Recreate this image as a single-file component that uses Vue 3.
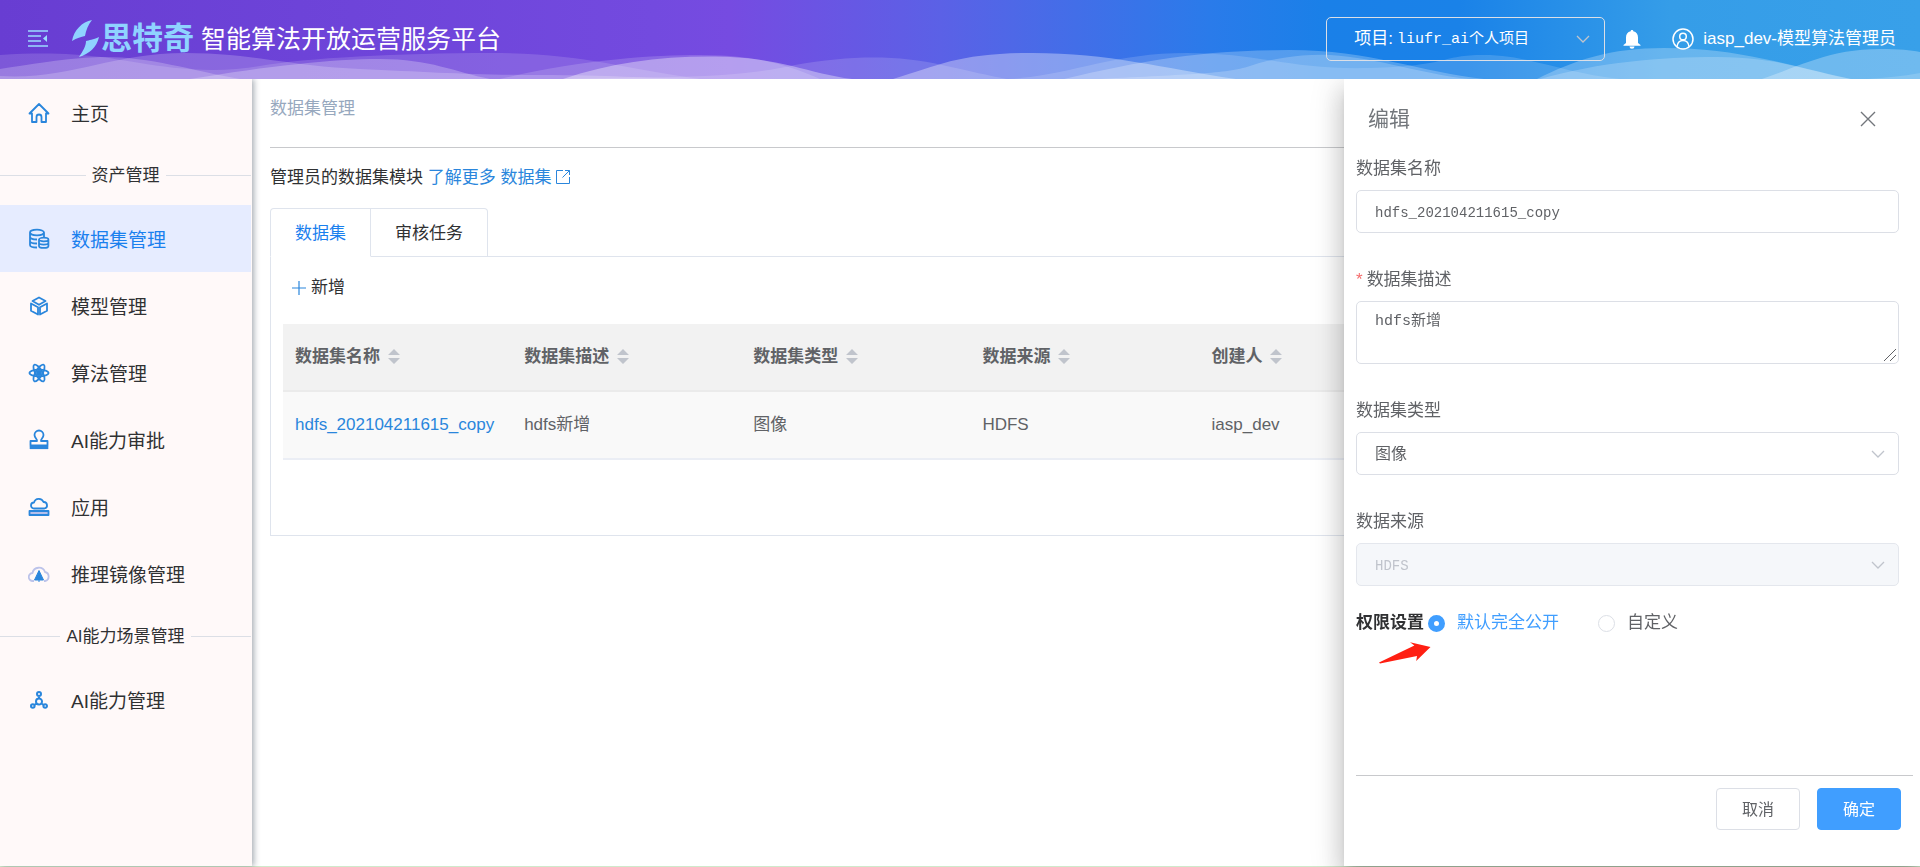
<template>
  <div class="layout">
    <header class="top-bar">
      <svg class="waves" viewBox="0 0 1920 79" preserveAspectRatio="none" aria-hidden="true">
        <path v-for="(wave, i) in waves" :key="i" :d="wave.d" fill="#fff" :fill-opacity="wave.o" />
      </svg>
      <button class="icon-btn fold-btn" aria-label="折叠菜单">
        <svg width="20" height="18" viewBox="0 0 20 18">
          <path d="M0 1h20M0 6h13M0 11h13M0 16h20" stroke="#9bdcff" stroke-width="1.4" fill="none" />
          <path d="M19 5v7l-4-3.500z" fill="#9bdcff" />
        </svg>
      </button>
      <svg class="logo-mark" width="27" height="37" viewBox="0 0 27 37" aria-hidden="true">
        <path d="M20 0C10 2 2 10 0 21C5 18 9 17 13 16C14 10 16 5 20 0Z" fill="#8fd3ff" />
        <path d="M27 17C21 20 17 20 14 21C14 26 11 31 7 37C17 34 25 27 27 17Z" fill="#8fd3ff" />
      </svg>
      <span class="logo-name">思特奇</span>
      <h1 class="title">智能算法开放运营服务平台</h1>
      <div class="project">
        <label for="project">项目:</label>
        <select id="project" v-model="project">
          <option>liufr_ai个人项目</option>
        </select>
        <svg class="arrow" width="14" height="8" viewBox="0 0 14 8" aria-hidden="true">
          <path d="M1 1l6 6 6-6" stroke="#c0c4cc" stroke-width="1.3" fill="none" />
        </svg>
      </div>
      <button class="icon-btn bell" aria-label="消息">
        <svg width="18" height="20" viewBox="0 0 18 20">
          <path d="M9 1c.9 0 1.300.5 1.300 1.300C13.500 3 15 5.500 15 8.500V14l2.500 2v.8H.5V16L3 14V8.500C3 5.500 4.500 3 7.700 2.300 7.700 1.500 8.100 1 9 1zM6.500 17.500h5a2.500 2.200 0 0 1-5 0z" fill="#fff" />
        </svg>
      </button>
      <a class="user" href="#">
        <svg width="22" height="22" viewBox="0 0 22 22" fill="none" stroke="#fff" stroke-width="1.500">
          <circle cx="11" cy="11" r="10" />
          <circle cx="11" cy="8.500" r="3.300" />
          <path d="M5 18.500c.5-4 3-6 6-6s5.500 2 6 6" />
        </svg>
        <span>iasp_dev-模型算法管理员</span>
      </a>
    </header>

    <div class="body">
      <nav class="sidebar">
        <template v-for="item in menus" :key="item.name">
          <div v-if="item.group" class="group"><span>{{ item.name }}</span></div>
          <a v-else href="#" class="menu-item" :class="{ active: item.name === current }" @click.prevent="current = item.name">
            <svg width="22" height="22" viewBox="0 0 22 22" aria-hidden="true">
              <path
                v-for="(p, i) in item.icon"
                :key="i"
                :d="p.d"
                :fill="p.fill || 'none'"
                :stroke="p.stroke || '#2a86dc'"
                :stroke-width="p.w || 1.8"
                :transform="p.t"
                stroke-linejoin="round"
              />
            </svg>
            <span>{{ item.name }}</span>
          </a>
        </template>
      </nav>

      <main class="content">
        <div class="crumb">数据集管理</div>
        <p class="intro">
          管理员的数据集模块
          <a href="#">了解更多 数据集<svg width="16" height="16" viewBox="0 0 16 16" fill="none" stroke="#2a86dc">
            <path d="M8 1.500H1.500v13h13V8M10 1.500h4.500V6M14.500 1.500L7.500 8.500" />
          </svg></a>
        </p>
        <div class="tabs">
          <button class="tab" :class="{ on: tab === 0 }" @click="tab = 0">数据集</button>
          <button class="tab" :class="{ on: tab === 1 }" @click="tab = 1">审核任务</button>
          <span class="tab-rest"></span>
        </div>
        <section class="panel">
          <button class="add">
            <svg width="14" height="14" viewBox="0 0 14 14"><path d="M7 0v14M0 7h14" stroke="#2a86dc" stroke-width="1.200" /></svg>
            新增
          </button>
          <table>
            <thead>
              <tr>
                <th v-for="col in columns" :key="col">
                  {{ col }}
                  <svg width="12" height="16" viewBox="0 0 12 16" aria-hidden="true">
                    <path d="M6 1l6 6H0zM6 16l6-6H0z" fill="#c0c4cc" />
                  </svg>
                </th>
                <th></th>
                <th></th>
              </tr>
            </thead>
            <tbody>
              <tr>
                <td><a href="#">hdfs_202104211615_copy</a></td>
                <td>hdfs新增</td>
                <td>图像</td>
                <td>HDFS</td>
                <td>iasp_dev</td>
                <td></td>
                <td></td>
              </tr>
            </tbody>
          </table>
        </section>
      </main>
    </div>
    <div class="bottom-line"></div>

    <!-- 编辑抽屉 -->
    <aside class="drawer">
      <div class="drawer-head">
        <h2>编辑</h2>
        <button class="icon-btn" aria-label="关闭">
          <svg width="16" height="16" viewBox="0 0 16 16"><path d="M1 1l14 14M15 1L1 15" stroke="#72767b" stroke-width="1.400" /></svg>
        </button>
      </div>
      <form class="form" @submit.prevent>
        <div class="field">
          <label for="name">数据集名称</label>
          <input id="name" v-model="form.name" type="text" />
        </div>
        <div class="field">
          <label for="desc" class="required">数据集描述</label>
          <div class="area-wrap">
            <textarea id="desc" v-model="form.desc"></textarea>
            <svg class="grip" width="14" height="14" viewBox="0 0 14 14" aria-hidden="true">
              <path d="M1 13L13 1M7 13l6-6" stroke="#606266" fill="none" />
            </svg>
          </div>
        </div>
        <div class="field">
          <label for="type">数据集类型</label>
          <div class="select-wrap">
            <select id="type" v-model="form.type" class="cn"><option>图像</option></select>
            <svg class="arrow" width="14" height="8" viewBox="0 0 14 8" aria-hidden="true">
              <path d="M1 1l6 6 6-6" stroke="#c0c4cc" stroke-width="1.300" fill="none" />
            </svg>
          </div>
        </div>
        <div class="field">
          <label for="source">数据来源</label>
          <div class="select-wrap">
            <select id="source" v-model="form.source" disabled><option>HDFS</option></select>
            <svg class="arrow" width="14" height="8" viewBox="0 0 14 8" aria-hidden="true">
              <path d="M1 1l6 6 6-6" stroke="#c0c4cc" stroke-width="1.300" fill="none" />
            </svg>
          </div>
        </div>
        <div class="auth" role="radiogroup" aria-labelledby="auth-title">
          <b id="auth-title">权限设置</b>
          <label><input v-model="form.auth" type="radio" name="auth" value="open" /><span>默认完全公开</span></label>
          <label><input v-model="form.auth" type="radio" name="auth" value="custom" /><span>自定义</span></label>
          <svg class="pointer" width="52" height="22" viewBox="0 0 52 22" aria-hidden="true">
            <path d="M0 20.500L35.400 3.500 31 .3 51.500 5 37.200 19 38 14 1 21.500z" fill="#ff1f12" />
          </svg>
        </div>
      </form>
      <div class="drawer-foot">
        <button class="btn">取消</button>
        <button class="btn primary">确定</button>
      </div>
    </aside>
  </div>
</template>

<script setup>
import { ref, reactive } from 'vue'

const project = ref('liufr_ai个人项目')
const current = ref('数据集管理')
const tab = ref(0)
const columns = ['数据集名称', '数据集描述', '数据集类型', '数据来源', '创建人']

const form = reactive({
  name: 'hdfs_202104211615_copy',
  desc: 'hdfs新增',
  type: '图像',
  source: 'HDFS',
  auth: 'open'
})

// 花瓣图标：同一个椭圆旋转三次
const petal = 'M1.500 11a9.500 3.400 0 1 0 19 0a9.500 3.400 0 1 0 -19 0'

const menus = [
  {
    name: '主页',
    icon: [{ d: 'M1.500 11.500L11 2l9.500 9.500H18V20h-4.500v-5a2.500 2.500 0 0 0-5 0v5H4v-8.500z' }]
  },
  { name: '资产管理', group: true },
  {
    name: '数据集管理',
    icon: [
      { d: 'M2 4.500a7 2.800 0 1 0 14 0a7 2.800 0 1 0 -14 0M2 4.500V17c0 1.500 3 2.500 7 2.500M16 4.500V9M2 8.500c0 2 3.500 3 7 3M2 13c0 1.500 3 2.500 7 2.500' },
      { d: 'M11 11.500a4.700 1.800 0 1 0 9.400 0a4.700 1.800 0 1 0 -9.400 0V18c0 2.600 9.400 2.600 9.400 0V11.500M11 14.800c0 2.400 9.400 2.400 9.400 0' }
    ]
  },
  {
    name: '模型管理',
    icon: [
      { d: 'M11 2.500L17.500 6 11 9.800 4.500 6z' },
      { d: 'M3 8.500l7 3.800v7.200l-7-3.800z' },
      { d: 'M19 8.500l-7 3.800v7.200l7-3.800z' }
    ]
  },
  {
    name: '算法管理',
    icon: [
      { d: petal },
      { d: petal, t: 'rotate(60 11 11)' },
      { d: petal, t: 'rotate(120 11 11)' },
      { d: 'M9 11a2 2 0 1 0 4 0a2 2 0 1 0 -4 0', fill: '#2a86dc' }
    ]
  },
  {
    name: 'AI能力审批',
    icon: [
      { d: 'M9 12c.5-2-2.500-3-2.500-6a4.500 4.500 0 0 1 9 0c0 3-3 4-2.500 6h6.500v4.500h-17V12z' },
      { d: 'M1.700 18.500h18.600', w: 3.2 }
    ]
  },
  {
    name: '应用',
    icon: [
      { d: 'M6 12.500a3 3 0 0 1 0-6a5 5 0 0 1 9.500-.5a3.300 3.300 0 0 1 1 6.500z' },
      { d: 'M1.500 15h19v4h-19z', fill: '#b5bfeb' }
    ]
  },
  {
    name: '推理镜像管理',
    icon: [
      { d: 'M6 18H5a4 4 0 0 1-.5-8a6.500 6.500 0 0 1 12.500-1a4.600 4.600 0 0 1 0 9h-1', stroke: '#bcc3ea' },
      { d: 'M11 7.500L15.500 17h-9zM11 8v11', fill: '#2a86dc', w: 1 }
    ]
  },
  { name: 'AI能力场景管理', group: true },
  {
    name: 'AI能力管理',
    icon: [
      { d: 'M9 5a2 2 0 1 0 4 0a2 2 0 1 0 -4 0M8 12.500a3 3 0 1 0 6 0a3 3 0 1 0 -6 0M3 17a1.800 1.800 0 1 0 3.600 0a1.800 1.800 0 1 0 -3.600 0M15.400 17a1.800 1.800 0 1 0 3.600 0a1.800 1.800 0 1 0 -3.600 0M11 7v2.500M8.500 14.500L6.500 16M13.500 14.500l2 1.500', w: 2 }
    ]
  }
]

// 顶部波浪
const waves = [
  { o: 0.14, d: 'M0 55C70 50 110 58 140 63S215 74 260 66S400 53 490 53S620 68 700 79H0Z' },
  { o: 0.22, d: 'M0 69C50 61 80 57 105 57C150 57 190 70 240 79H0Z' },
  { o: 0.2, d: 'M0 76C70 80 110 53 185 53C250 53 290 66 360 69S470 75 540 75S640 78 700 79H0Z' },
  { o: 0.25, d: 'M190 79C270 66 330 59 380 59C430 59 455 72 490 79Z' },
  { o: 0.36, d: 'M563 79C610 63 660 56 715 56.500C780 57 810 74 852 79Z' },
  { o: 0.16, d: 'M500 79C580 60 650 55 700 55C760 55 790 66 820 79Z' },
  { o: 0.15, d: 'M560 79C660 76 730 80 795 65C850 55 900 55 942 65C970 71 990 76 1007 79Z' },
  { o: 0.34, d: 'M893 79C940 65 960 53 1032 53C1110 53 1160 68 1236 79Z' },
  { o: 0.15, d: 'M1007 79C1070 76 1110 53 1187 53C1260 53 1290 70 1370 68S1440 55 1484 55S1560 72 1620 79Z' },
  { o: 0.24, d: 'M1064 79C1140 61 1200 50 1290 50C1370 50 1420 72 1484 79Z' },
  { o: 0.2, d: 'M1100 79C1190 74 1225 74 1250 66S1300 54 1330 55C1380 58 1420 74 1470 79Z' },
  { o: 0.25, d: 'M1537 79C1575 60 1610 48 1664 48C1740 48 1790 66 1851 79Z' },
  { o: 0.2, d: 'M1540 79C1600 62 1660 57 1717 57C1780 57 1810 72 1851 79Z' },
  { o: 0.28, d: 'M1762 79C1800 66 1830 49 1880 49C1900 49 1910 50 1920 52V79Z' },
  { o: 0.16, d: 'M1740 79C1830 80 1870 82 1920 73V79Z' }
]
</script>

<style>
body {
  margin: 0;
}
</style>

<style scoped>
* {
  box-sizing: border-box;
}

.layout {
  display: flex;
  flex-direction: column;
  min-height: 100vh;
  background: #fff;
  color: #303133;
  font-family: 'Liberation Sans', 'Noto Sans CJK SC', sans-serif;
  font-size: 17px;
  line-height: 24px;
}

a {
  color: #2a86dc;
  text-decoration: none;
}

button,
select,
input,
textarea {
  font-family: inherit;
  font-size: inherit;
  margin: 0;
}

svg {
  flex: none;
}

.icon-btn {
  display: flex;
  padding: 0;
  border: none;
  background: none;
  cursor: pointer;
}

/* 顶栏 */
.top-bar {
  position: relative;
  z-index: 20;
  display: flex;
  align-items: center;
  height: 79px;
  padding: 0 24px 2px 28px;
  color: #fff;
  background: linear-gradient(90deg, #683dd2 0%, #734adf 34%, #764be1 38%, #5b61e6 49%, #2a7bea 63%, #1a80e8 69%, #1a82e8 76%, #359de8 87%, #38a0e9 100%);
}

.waves {
  position: absolute;
  left: 0;
  top: 0;
  width: 100%;
  height: 100%;
  pointer-events: none;
}

.fold-btn {
  margin-right: 24px;
}

.logo-mark {
  margin-right: 2px;
}

.logo-name {
  margin-right: 7px;
  color: #8fd3ff;
  font-size: 31px;
  font-weight: bold;
  line-height: 36px;
}

.title {
  margin: 0 auto 0 0;
  font-size: 25px;
  font-weight: normal;
  line-height: 36px;
}

.project {
  position: relative;
  display: flex;
  align-items: center;
  width: 279px;
  height: 44px;
  margin-right: 18px;
  padding-left: 27px;
  border: 1px solid #dcdfe6;
  border-radius: 5px;
}

.project select {
  flex: 1;
  height: 42px;
  padding: 2px 0 0 4px;
  border: none;
  outline: none;
  background: transparent;
  color: #fff;
  font-family: 'Liberation Mono', 'Noto Sans CJK SC', monospace;
  font-size: 15px;
  appearance: none;
}

.arrow {
  position: absolute;
  right: 14px;
  top: 50%;
  margin-top: -4px;
  pointer-events: none;
}

.bell {
  margin-right: 31px;
}

.user {
  display: flex;
  align-items: center;
  gap: 9px;
  color: #fff;
}

.body {
  display: flex;
  flex: 1;
}

/* 侧边栏 */
.sidebar {
  position: relative;
  z-index: 1;
  width: 252px;
  flex: none;
  border-right: 1px solid #fff9f9;
  background: #fff9f9;
  box-shadow: 2px 0 6px rgba(0, 21, 41, 0.35);
}

.menu-item {
  display: flex;
  align-items: center;
  gap: 21px;
  height: 67px;
  padding-left: 28px;
  color: #303133;
  font-size: 19px;
}

.menu-item span {
  padding-top: 4px;
}

.menu-item.active {
  background: #e6ecff;
  color: #1a80ee;
}

.group {
  display: flex;
  align-items: center;
  gap: 6px;
  height: 59px;
}

.group::before,
.group::after {
  content: '';
  flex: 1;
  height: 1px;
  background: #dcdfe6;
}

/* 内容区 */
.content {
  flex: 1;
  min-width: 0;
  padding: 0 20px 0 18px;
}

.crumb {
  height: 69px;
  padding-top: 18px;
  border-bottom: 1px solid #c8c9cc;
  color: #97a8be;
}

.intro {
  margin: 18px 0;
}

.intro svg {
  margin-left: 4px;
  vertical-align: -2px;
}

.tabs {
  display: flex;
}

.tab {
  height: 49px;
  padding: 0 24px 2px;
  border: 1px solid #dfe4ed;
  border-left-width: 0;
  background: #fff;
  color: #303133;
  cursor: pointer;
}

.tab:first-child {
  border-left-width: 1px;
  border-top-left-radius: 4px;
}

.tab:nth-child(2) {
  border-top-right-radius: 4px;
}

.tab.on {
  border-bottom-color: #fff;
  color: #1a80ee;
}

.tab-rest {
  flex: 1;
  border-bottom: 1px solid #dfe4ed;
}

.panel {
  padding: 19px 12px 75px;
  border: 1px solid #dfe4ed;
  border-top: none;
}

.add {
  display: flex;
  align-items: center;
  gap: 5px;
  margin-bottom: 24px;
  padding: 0 9px;
  border: none;
  background: none;
  color: #303133;
  line-height: 24px;
  cursor: pointer;
}

table {
  width: 100%;
  table-layout: fixed;
  border-collapse: collapse;
  color: #606266;
}

th,
td {
  padding: 0 12px;
  border-bottom: 2px solid #ebeef5;
  text-align: left;
  white-space: nowrap;
}

th {
  height: 67px;
  border-color: #ebebeb;
  background: #f2f2f2;
}

th svg {
  margin-left: 3px;
  vertical-align: -2px;
}

td {
  height: 68px;
  background: #f9f9f9;
}

.bottom-line {
  height: 1px;
  background: #cfe9cb;
}

/* 抽屉 */
.drawer {
  position: fixed;
  z-index: 10;
  top: 79px;
  right: 0;
  bottom: 1px;
  display: flex;
  flex-direction: column;
  width: 30%;
  background: #fff;
  box-shadow: 0 8px 10px -5px rgba(0, 0, 0, 0.2), 0 16px 24px 2px rgba(0, 0, 0, 0.14), 0 6px 30px 5px rgba(0, 0, 0, 0.12);
}

.drawer-head {
  display: flex;
  align-items: center;
  justify-content: space-between;
  height: 68px;
  padding: 12px 44px 0 24px;
}

.drawer-head h2 {
  margin: 0;
  color: #72767b;
  font-size: 21px;
  font-weight: normal;
}

.form {
  flex: 1;
  padding: 0 21px 0 12px;
}

.field {
  margin-bottom: 25px;
  color: #606266;
}

.field label {
  display: block;
  line-height: 43px;
}

.required::before {
  content: '*';
  margin-right: 4px;
  color: #f56c6c;
}

.field input,
.field textarea,
.field select {
  display: block;
  width: 100%;
  height: 43px;
  padding: 2px 18px 0;
  border: 1px solid #dcdfe6;
  border-radius: 5px;
  outline: none;
  background: #fff;
  color: #606266;
  font-family: 'Liberation Mono', 'Noto Sans CJK SC', monospace;
  font-size: 14px;
  appearance: none;
}

.field textarea {
  height: 63px;
  padding: 8px 18px;
  font-size: 15px;
  line-height: 24px;
  resize: none;
}

.field select.cn {
  font-size: 16px;
}

.field select:disabled {
  border-color: #e4e7ed;
  background: #f5f7fa;
  color: #c0c4cc;
  opacity: 1;
}

.select-wrap,
.area-wrap {
  position: relative;
}

.grip {
  position: absolute;
  right: 2px;
  bottom: 2px;
  pointer-events: none;
}

.auth {
  position: relative;
  display: flex;
  align-items: center;
  gap: 39px;
  color: #606266;
}

.auth b {
  margin-right: -35px;
  color: #303133;
}

.auth label {
  display: flex;
  align-items: center;
  gap: 12px;
}

.auth input {
  width: 17px;
  height: 17px;
  margin: 0;
  border: 1px solid #dcdfe6;
  border-radius: 50%;
  background: #fff;
  appearance: none;
}

.auth input:checked {
  border: 6px solid #409eff;
}

.auth input:checked + span {
  color: #409eff;
}

.pointer {
  position: absolute;
  left: 23px;
  top: 31px;
}

.drawer-foot {
  display: flex;
  justify-content: flex-end;
  gap: 17px;
  margin: 0 7px 0 12px;
  padding: 12px 12px 36px 0;
  border-top: 1px solid #c8c9cc;
}

.btn {
  width: 84px;
  height: 42px;
  padding: 0 0 2px;
  border: 1px solid #dcdfe6;
  border-radius: 4px;
  background: #fff;
  color: #606266;
  font-size: 16px;
  cursor: pointer;
}

.btn.primary {
  border-color: #409eff;
  background: #409eff;
  color: #fff;
}
</style>
